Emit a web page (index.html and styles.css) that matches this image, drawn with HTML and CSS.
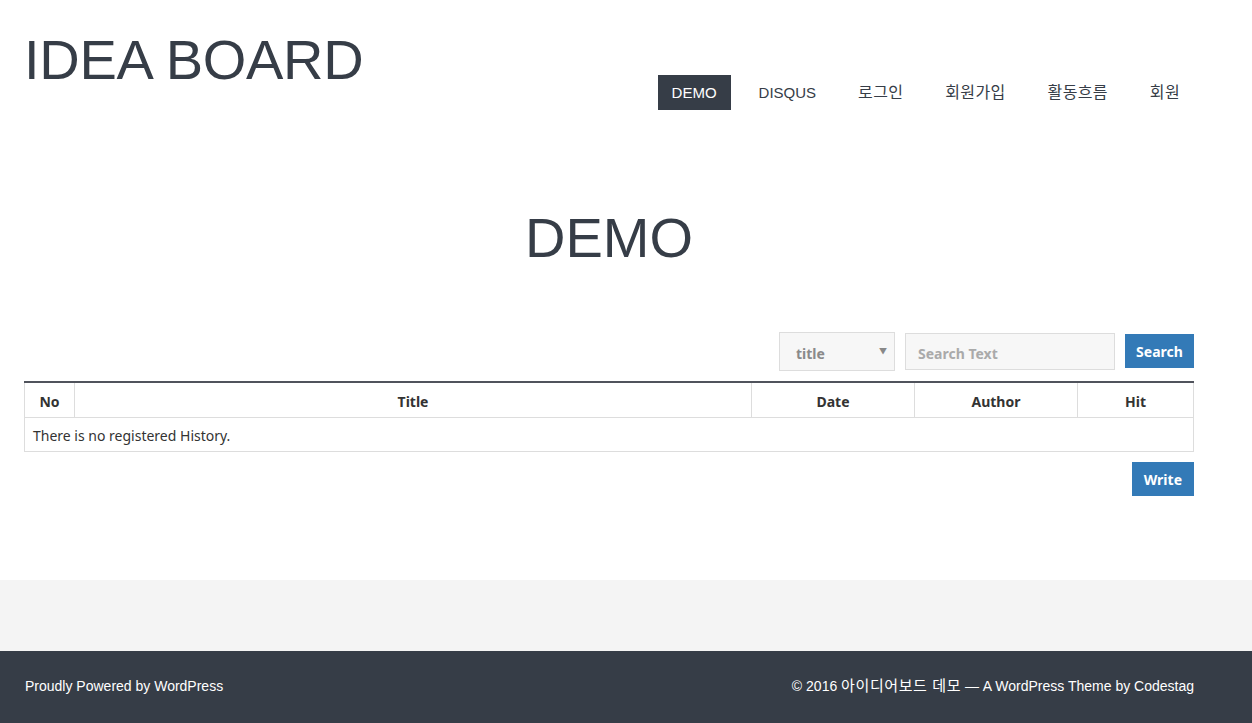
FILE: index.html
```html
<!DOCTYPE html>
<html lang="ko">
<head>
<meta charset="utf-8">
<title>IDEA BOARD</title>
<link rel="stylesheet" href="styles.css">
</head>
<body>
<header class="site-header">
  <div class="container header-inner">
    <h1 class="site-title">IDEA BOARD</h1>
    <nav class="main-nav">
      <ul class="menu">
        <li class="menu-item active"><a href="#">DEMO</a></li>
        <li class="menu-item"><a href="#">DISQUS</a></li>
        <li class="menu-item"><a href="#" class="ko">로그인</a></li>
        <li class="menu-item"><a href="#" class="ko">회원가입</a></li>
        <li class="menu-item"><a href="#" class="ko">활동흐름</a></li>
        <li class="menu-item"><a href="#" class="ko">회원</a></li>
      </ul>
    </nav>
  </div>
</header>

<main class="site-main">
  <div class="container">
    <h2 class="page-title">DEMO</h2>

    <div class="board">
      <form class="search-bar">
        <div class="select-wrap">
          <span class="select-value">title</span>
          <span class="select-arrow">▼</span>
        </div>
        <div class="search-input">Search Text</div>
        <button type="button" class="btn btn-search">Search</button>
      </form>

      <table class="board-table">
        <thead>
          <tr>
            <th class="col-no">No</th>
            <th class="col-title">Title</th>
            <th class="col-date">Date</th>
            <th class="col-author">Author</th>
            <th class="col-hit">Hit</th>
          </tr>
        </thead>
        <tbody>
          <tr>
            <td colspan="5" class="empty">There is no registered History.</td>
          </tr>
        </tbody>
      </table>

      <div class="board-actions">
        <button type="button" class="btn btn-write">Write</button>
      </div>
    </div>
  </div>
</main>

<div class="footer-widgets"></div>

<footer class="site-footer">
  <div class="container footer-inner">
    <span>Proudly Powered by WordPress</span>
    <span>© 2016 <span class="ko-foot">아이디어보드 데모</span> — A WordPress Theme by Codestag</span>
  </div>
</footer>
</body>
</html>
```

FILE: styles.css
```css
* {
  box-sizing: border-box;
}

html, body {
  margin: 0;
  padding: 0;
}

body {
  background: #fff;
  color: #363d47;
  font-family: "Liberation Sans", Arial, "Noto Sans CJK KR", sans-serif;
}

.container {
  width: 1170px;
  margin-left: 24px;
}

/* Header */
.site-header {
  height: 140px;
}

.header-inner {
  display: flex;
  justify-content: space-between;
  align-items: flex-start;
}

.site-title {
  margin: 29px 0 0 0;
  font-size: 56px;
  line-height: 62px;
  font-weight: 400;
  color: #363d47;
  letter-spacing: -0.3px;
}

.menu {
  list-style: none;
  margin: 75px 0 0 0;
  padding: 0;
  display: flex;
  gap: 14px;
}

.menu-item a {
  display: block;
  padding: 0 14px;
  height: 35px;
  line-height: 35px;
  font-size: 15px;
  color: #363d47;
  text-decoration: none;
  font-family: "Liberation Sans", Arial, "Noto Sans CJK KR", sans-serif;
}

.menu-item a.ko {
  font-size: 16px;
  letter-spacing: 0.35px;
  line-height: 34px;
  padding-top: 1px;
}

.menu-item.active a {
  background: #363d47;
  color: #fff;
}

/* Main */
.site-main {
  height: 440px;
}

.page-title {
  margin: 0;
  padding-top: 67px;
  text-align: center;
  font-size: 56px;
  line-height: 62px;
  font-weight: 400;
  color: #363d47;
}

.board {
  margin-top: 63px;
  font-family: "Noto Sans", "Noto Sans CJK KR", sans-serif;
}

.search-bar {
  display: flex;
  justify-content: flex-end;
  align-items: center;
  height: 39px;
  margin: 0;
}

.select-wrap {
  width: 116px;
  height: 39px;
  background: #f7f7f7;
  border: 1px solid #dddddd;
  display: flex;
  align-items: center;
  justify-content: space-between;
  padding: 3px 7px 0 16px;
  color: #8a8a8a;
  font-size: 14px;
  font-weight: 700;
}

.select-arrow {
  font-size: 8px;
  color: #888;
  align-self: flex-start;
  margin-top: 9px;
}

.search-input {
  width: 210px;
  height: 37px;
  margin-left: 10px;
  background: #f7f7f7;
  border: 1px solid #dddddd;
  padding: 3px 12px 0;
  display: flex;
  align-items: center;
  color: #aaaaaa;
  font-size: 14px;
  font-weight: 700;
}

.btn {
  border: none;
  background: #337ab7;
  color: #fff;
  font-family: "Noto Sans", "Noto Sans CJK KR", sans-serif;
  font-size: 14px;
  font-weight: 700;
  height: 34px;
  padding: 0 12px;
  cursor: pointer;
}

.btn-search {
  margin-left: 10px;
  width: 69px;
  padding: 0;
  margin-top: -1px;
}

.board-table {
  width: 100%;
  margin-top: 10px;
  border-collapse: collapse;
  border-top: 2px solid #50535c;
  font-size: 14px;
  color: #333;
}

.board-table th,
.board-table td {
  border: 1px solid #dddddd;
}

.board-table thead th {
  border-top: none;
  height: 35px;
  font-weight: 700;
  text-align: center;
  padding: 3px 8px 0;
}

.col-no { width: 50px; }
.col-date { width: 163px; }
.col-author { width: 163px; }
.col-hit { width: 116px; }

.board-table td.empty {
  height: 34px;
  padding: 3px 8px 0;
  text-align: left;
}

.board-actions {
  display: flex;
  justify-content: flex-end;
  margin-top: 10px;
}

.btn-write {
  height: 34px;
  padding: 2px 12px 0;
}

/* Footer */
.footer-widgets {
  height: 71px;
  background: #f4f4f4;
}

.site-footer {
  height: 72px;
  background: #363d47;
  color: #fff;
  font-size: 14px;
  line-height: 16px;
}

.footer-inner {
  display: flex;
  justify-content: space-between;
  align-items: center;
  height: 70px;
  padding-left: 1px;
}

.ko-foot {
  font-size: 15px;
  line-height: 10px;
  letter-spacing: 0.6px;
}
```
